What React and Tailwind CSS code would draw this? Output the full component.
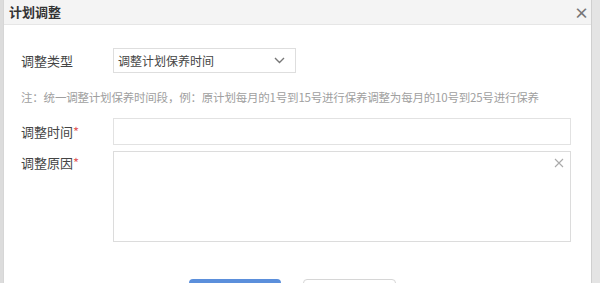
import React from 'react';

const font = { fontFamily: '"Microsoft YaHei", "Noto Sans CJK SC", "Liberation Sans", sans-serif' };

export default function App() {
    return (
        <div className="w-[600px] h-[283px] overflow-hidden bg-[#e9e9e9] flex" style={font}>
            <div className="w-[3px] bg-[#dcdcdc]" />
            <div className="w-[588px] bg-white flex flex-col border-l border-[#d6d6d6]">
                <div className="h-[25px] shrink-0 bg-[#f4f4f4] border-b border-[#e6e6e6] flex items-center justify-between pl-[5px] pr-[2px]">
                    <span className="text-[13px] font-bold text-[#333]">计划调整</span>
                    <span className="text-[15px] font-bold text-[#777] leading-none">×</span>
                </div>
                <div className="flex flex-col pl-[17px] pr-[20px] pt-[23px] text-[13px] text-[#444]">
                    <div className="flex items-center h-[25px]">
                        <span className="w-[92px]">调整类型</span>
                        <div className="w-[183px] h-[25px] border border-[#dedede] flex items-center justify-between pl-[4px] pr-[10px]">
                            <span className="text-[12px]">调整计划保养时间</span>
                            <svg width="11" height="7" viewBox="0 0 11 7" fill="none">
                                <path d="M1 1l4.5 4.5L10 1" stroke="#777" strokeWidth="1.4" />
                            </svg>
                        </div>
                    </div>
                    <div className="mt-[16px] text-[11.5px] tracking-[-0.2px] whitespace-nowrap text-[#a0a0a0] leading-[17px]">
                        注：统一调整计划保养时间段，例：原计划每月的1号到15号进行保养调整为每月的10号到25号进行保养
                    </div>
                    <div className="flex items-center mt-[12px]">
                        <span className="w-[92px]">调整时间<span className="text-[#e25b5b]">*</span></span>
                        <div className="flex-1 h-[27px] border border-[#e2e2e2]" />
                    </div>
                    <div className="flex items-start mt-[6px]">
                        <span className="w-[92px] pt-[2px]">调整原因<span className="text-[#e25b5b]">*</span></span>
                        <div className="flex-1 h-[91px] border border-[#dcdcdc] flex justify-end pr-[6px] pt-[6px]">
                            <svg width="10" height="10" viewBox="0 0 10 10">
                                <path d="M1 1l8 8M9 1l-8 8" stroke="#aaa" strokeWidth="1.1" />
                            </svg>
                        </div>
                    </div>
                    <div className="flex mt-[37px] pl-[168px] gap-[22px]">
                        <div className="w-[92px] h-[20px] bg-[#5b8fdb] rounded-sm" />
                        <div className="w-[93px] h-[20px] border border-[#d6d6d6] bg-white rounded-sm" />
                    </div>
                </div>
            </div>
            <div className="flex-1 bg-[#e4e4e4] border-l border-[#cfcfcf]" />
        </div>
    );
}
